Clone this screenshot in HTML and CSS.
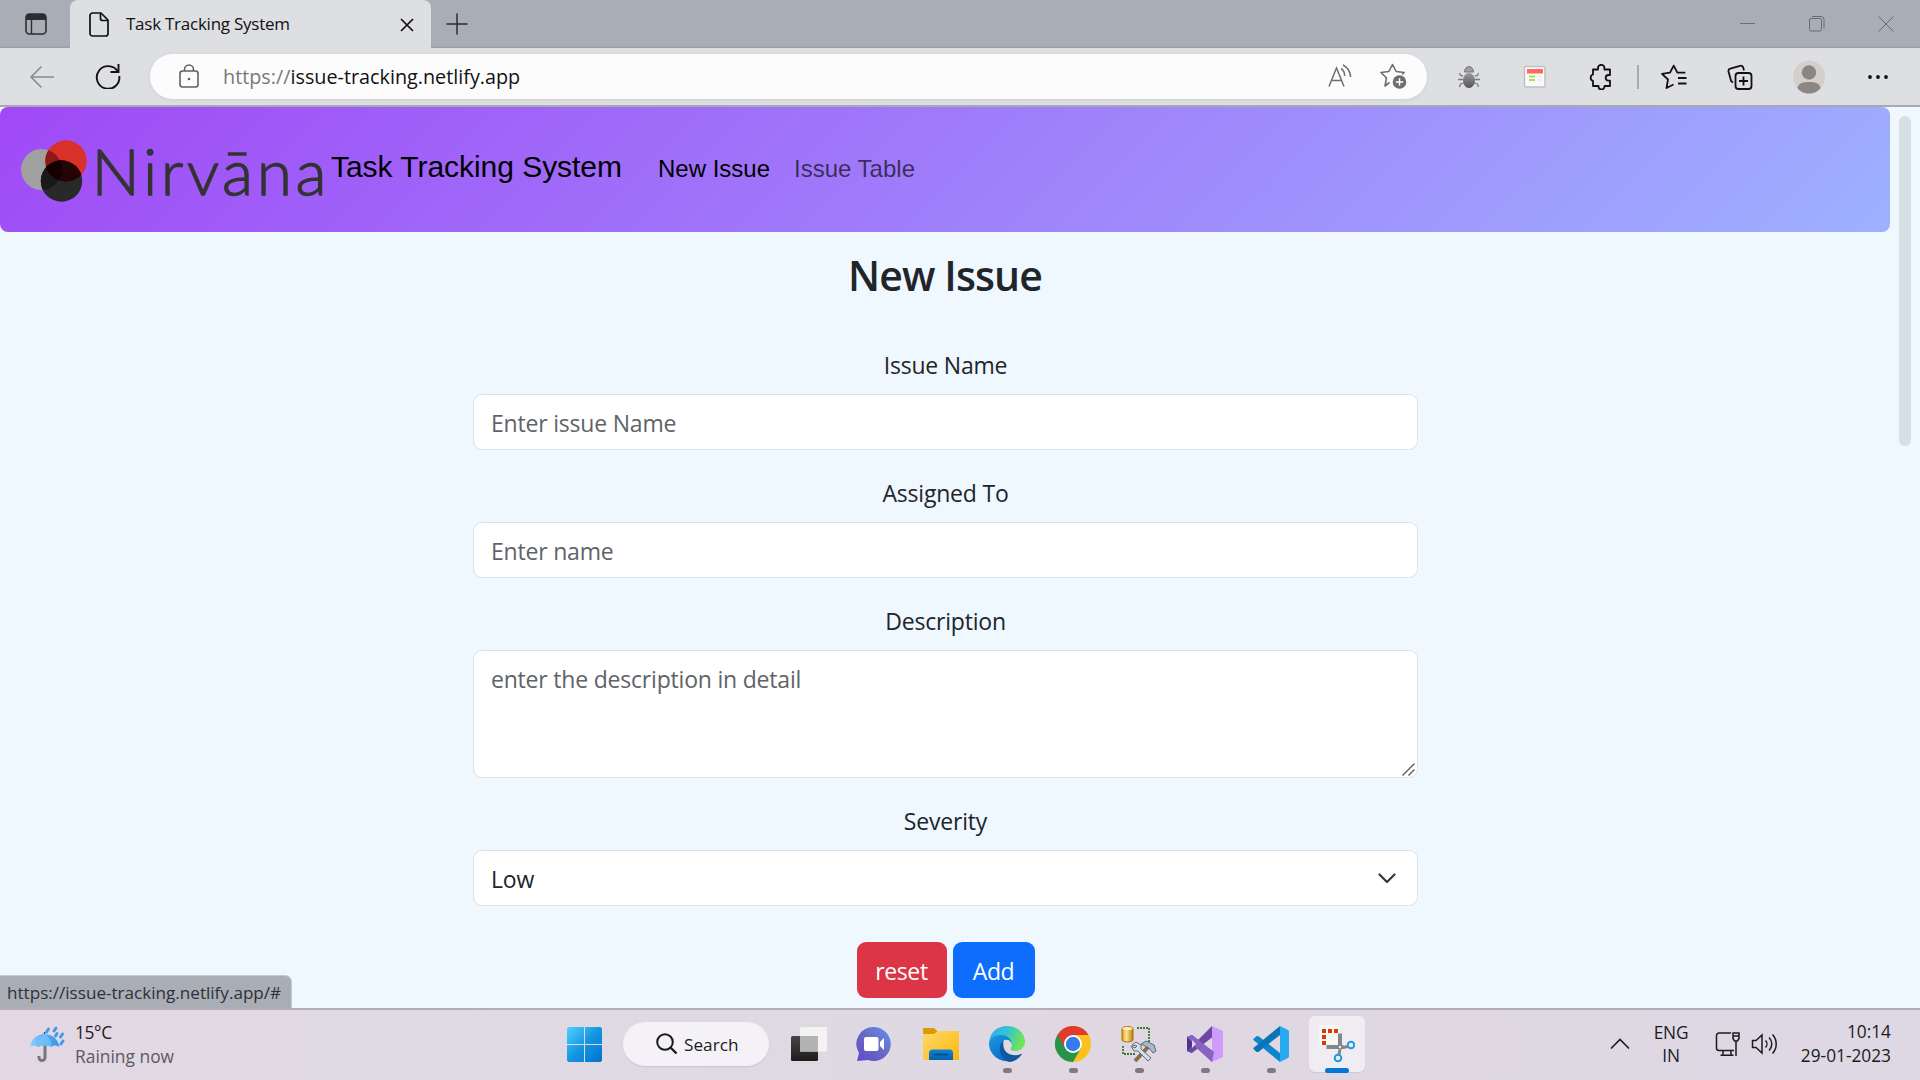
FILE: index.html
```html
<!DOCTYPE html>
<html lang="en">
<head>
<meta charset="utf-8">
<title>Task Tracking System</title>
<link rel="stylesheet" href="styles.css">
</head>
<body>
<div class="tabstrip">
  <svg class="tab-actions" width="22" height="22" viewBox="0 0 22 22"><rect x="1" y="1" width="20" height="20" rx="3.5" fill="none" stroke="#2b2d31" stroke-width="1.6"/><path d="M1 7V4a3 3 0 0 1 3-3h14a3 3 0 0 1 3 3v3z" fill="#2b2d31"/><path d="M6.5 7v14" stroke="#2b2d31" stroke-width="1.4"/></svg>
  <div class="tab">
    <svg width="20" height="25" viewBox="0 0 20 25" fill="none" stroke="#111" stroke-width="1.7" stroke-linejoin="round"><path d="M3.5 1H12l7 7v13.5a2.5 2.5 0 0 1-2.500 2.500h-13A2.500 2.500 0 0 1 1 21.500v-18A2.500 2.500 0 0 1 3.500 1z"/><path d="M11.500 1v5.500a2 2 0 0 0 2 2H19"/></svg>
    <span class="tab-title">Task Tracking System</span>
    <svg class="tab-close" width="14" height="14" viewBox="0 0 14 14"><path d="M1 1l12 12M13 1L1 13" stroke="#111" stroke-width="1.7"/></svg>
  </div>
  <svg class="tab-add" width="22" height="22" viewBox="0 0 22 22"><path d="M11 .5v21M.5 11h21" stroke="#2b2d31" stroke-width="1.500"/></svg>
  <div class="window-controls">
    <svg width="16" height="16" viewBox="0 0 16 16"><path d="M0 7.500h15" stroke="#6a6d73"/></svg>
    <svg width="16" height="16" viewBox="0 0 16 16" fill="none" stroke="#6a6d73"><rect x=".5" y="2.500" width="12" height="12.500" rx="1.500"/><path d="M3 .5h9a3 3 0 0 1 3 3v9"/></svg>
    <svg width="16" height="16" viewBox="0 0 16 16"><path d="M.5.5l15 15M15.500.5l-15 15" stroke="#6a6d73"/></svg>
  </div>
</div>

<div class="toolbar">
  <svg class="back" width="26" height="24" viewBox="0 0 26 24" fill="none" stroke="#8a8b8e" stroke-width="1.600"><path d="M12.500 1.500L2 12l10.500 10.500M2 12h23"/></svg>
  <svg class="reload" width="26" height="26" viewBox="0 0 26 26" fill="none" stroke="#111" stroke-width="1.900"><path d="M22.700 8.500A11.300 11.300 0 1 0 24.300 13"/><path d="M23.500 1v8h-8"/></svg>
  <div class="address">
    <svg class="lock" width="20" height="24" viewBox="0 0 20 24" fill="none" stroke="#5f6063" stroke-width="1.600"><rect x="1" y="7" width="18" height="16" rx="2.500"/><path d="M5.500 7V5.500a4.500 4.500 0 0 1 9 0V7"/><circle cx="10" cy="15" r="1.300" fill="#5f6063" stroke="none"/></svg>
    <span class="url"><span class="scheme">https://</span>issue-tracking.netlify.app</span>
    <svg class="read" width="24" height="24" viewBox="0 0 24 24" fill="none" stroke="#6d6e70" stroke-width="1.500"><path d="M1 22.500L8.500 4l7.500 18.500M3.500 16.500h10M13 4.500c2.500 1.500 3.700 4 3.700 7.500M15 1c5 2.500 7.300 6.500 7.600 12"/></svg>
    <svg class="star" width="27" height="27" viewBox="0 0 27 27"><path d="M9.500 19.500L5 23l1.500-8L1 9.500l7.800-1L12.500 1.500l3.700 7 8 1-2 2" fill="none" stroke="#6d6e70" stroke-width="1.600" stroke-linejoin="round"/><circle cx="19.500" cy="19" r="6.800" fill="#6d6e70"/><path d="M19.500 15.300v7.400M15.800 19h7.400" stroke="#fff" stroke-width="1.500"/></svg>
  </div>
  <div class="slot"><svg width="24" height="24" viewBox="0 0 24 24"><defs><linearGradient id="bug" x2="0" y2="1"><stop stop-color="#9a9a9a"/><stop offset="1" stop-color="#555"/></linearGradient></defs><path d="M6 11L3.500 10.500 2.500 8M6 14.500H1M7 18l-3.500 1L2.500 22M18 11l2.500-.5L21.500 8M18 14.500h5M17 18l3.500 1 1 3" fill="none" stroke="#7b7b7b" stroke-width="1.300"/><path d="M7.500 7a4.500 5.500 0 0 1 9 0z" fill="#a0a0a0" stroke="#777"/><ellipse cx="12" cy="15.500" rx="6" ry="7.500" fill="url(#bug)"/></svg></div>
  <div class="slot"><svg width="24" height="24" viewBox="0 0 24 24"><rect x="1.500" y="1.500" width="20.500" height="20.500" rx="1.500" fill="#fafafa" stroke="#bfc1c1" stroke-width="1.500"/><path d="M4 4h16v4.500H4z" fill="#ff6961"/><path d="M6 11.500h6M6 15h6" stroke="#a4e34d" stroke-width="2.200"/><path d="M14 11.500h5M14 15h5" stroke="#eee" stroke-width="2"/></svg></div>
  <div class="slot"><svg width="24" height="26" viewBox="0 0 24 26"><path d="M4 5.500h5V4a3.200 3.200 0 0 1 6.400 0v1.500H21V11h-1.500a2.800 2.800 0 0 0 0 5.600H21V22h-5.500v.5a3 3 0 0 1-6 0V22H4v-5.200a3.300 3.300 0 0 1 0-6.300z" fill="none" stroke="#111" stroke-width="1.800" stroke-linejoin="round"/></svg></div>
  <i class="divider"></i>
  <div class="slot"><svg width="26" height="26" viewBox="0 0 26 26" fill="none" stroke="#111" stroke-width="1.800" stroke-linejoin="round"><path d="M12.500 20.500L5.500 24 7 15.500 1 9.800l8-1.200 3.700-7 3.700 7h8M17 14h8.500M17 19.500h8.500"/></svg></div>
  <div class="slot"><svg width="26" height="26" viewBox="0 0 26 26" fill="none" stroke="#111" stroke-width="1.800"><path d="M17 6.500l-.8-3A2.500 2.500 0 0 0 13 1.800L3.300 4.600A2.500 2.500 0 0 0 1.500 7.500l2.700 9.800L6 18.500"/><rect x="8.500" y="9" width="16" height="16" rx="3"/><path d="M16.500 12.500v9M12 17h9"/></svg></div>
  <div class="slot avatar"><svg width="32" height="34" viewBox="0 0 32 34"><ellipse cx="16" cy="17" rx="16" ry="16.500" fill="#d3d0cc"/><circle cx="16" cy="12.500" r="7.200" fill="#8b8684"/><path d="M4.500 28C6 22.500 10 22 16 22s10 .5 11.500 6c-3 4-7 5.500-11.500 5.500S7.500 32 4.500 28z" fill="#8b8684"/></svg></div>
  <div class="slot"><svg width="22" height="6" viewBox="0 0 22 6" fill="#111"><circle cx="3" cy="3" r="1.900"/><circle cx="11" cy="3" r="1.900"/><circle cx="19" cy="3" r="1.900"/></svg></div>
</div>

<main class="page">
  <div class="content">
    <nav class="navbar">
      <svg class="logo" width="306" height="76" viewBox="0 0 306 76">
        <circle cx="20.500" cy="36.500" r="20.500" fill="#a1a1a1"/><circle cx="45" cy="28" r="20.700" fill="#d9302a"/>
        <clipPath id="red"><circle cx="45" cy="28" r="20.700"/></clipPath><clipPath id="dark"><circle cx="40.500" cy="48" r="20.700"/></clipPath>
        <circle cx="20.500" cy="36.500" r="20.500" fill="#8c1b18" clip-path="url(#red)"/>
        <circle cx="40.500" cy="48" r="20.700" fill="#292929"/>
        <g clip-path="url(#dark)"><circle cx="20.500" cy="36.500" r="20.500" fill="#191919"/><circle cx="45" cy="28" r="20.700" fill="#240405"/><circle cx="20.500" cy="36.500" r="20.500" fill="#140000" clip-path="url(#red)"/></g>
        <text x="70.500" y="61.500" class="wordmark" textLength="235">Nirvāna</text>
      </svg>
      <span class="brand">Task Tracking System</span>
      <a class="nav-link active">New Issue</a>
      <a class="nav-link">Issue Table</a>
    </nav>
    <h1>New Issue</h1>
    <form class="form">
      <label>Issue Name</label>
      <div class="field">Enter issue Name</div>
      <label>Assigned To</label>
      <div class="field">Enter name</div>
      <label>Description</label>
      <div class="field area">enter the description in detail<svg class="grip" width="13" height="13" viewBox="0 0 13 13"><path d="M.5 12.500l12-12M6.500 12.500l6-6" stroke="#555" stroke-width="1.300"/></svg></div>
      <label>Severity</label>
      <div class="field select">Low<svg width="18" height="11" viewBox="0 0 18 11"><path d="M1.500 1.500L9 9l7.500-7.500" fill="none" stroke="#343a40" stroke-width="2.200" stroke-linecap="round" stroke-linejoin="round"/></svg></div>
      <div class="buttons"><span class="btn reset">reset</span><span class="btn add">Add</span></div>
    </form>
  </div>
  <div class="scroll"><i></i></div>
  <div class="status">https://issue-tracking.netlify.app/#</div>
</main>

<footer class="taskbar">
  <div class="weather">
    <svg width="36" height="38" viewBox="0 0 36 38"><defs><linearGradient id="umb" x2="1"><stop stop-color="#8fd0ff"/><stop offset=".5" stop-color="#55aef5"/><stop offset="1" stop-color="#3b94e8"/></linearGradient></defs><path d="M15 20v12.500a3 3 0 0 1-6 0V31" fill="none" stroke="#777" stroke-width="3"/><path d="M14.500 7v3" stroke="#555" stroke-width="1.500"/><path d="M0 22C1 14 7 9 14.500 9S28 14 29.500 22c-3-2-6-2-8 0-4-2-10-2-13 0-3-2-6-2-8.500 0z" fill="url(#umb)"/><path d="M8.500 22c0-6 2-11 6-13 4 2 7 7 7 13-4-2-10-2-13 0z" fill="#79c3fb" opacity=".7"/><path d="M18.500 4l-2 3M26 3l-2 3M25.500 11l1.500-2.500M32.500 9l-2 3M33 16l-2 3" stroke="#3c9bf0" stroke-width="3" stroke-linecap="round"/></svg>
    <div><div class="temp">15°C</div><div class="cond">Raining now</div></div>
  </div>
  <div class="apps">
    <div class="app"><svg width="35" height="35" viewBox="0 0 35 35"><defs><linearGradient id="win" x2="1" y2="1"><stop stop-color="#4fd2ff"/><stop offset=".5" stop-color="#1496e0"/><stop offset="1" stop-color="#0072d0"/></linearGradient></defs><path d="M1.500 0H17v17H0V1.500zM18 0h15.500L35 1.500V17H18zM0 18h17v17H1.500L0 33.500zM18 18h17v15.500L33.500 35H18z" fill="url(#win)"/></svg></div>
    <div class="search"><svg width="22" height="22" viewBox="0 0 22 22" fill="none" stroke="#1b1b1f" stroke-width="2"><circle cx="9" cy="9" r="7.800"/><path d="M14.500 14.500l6 6" stroke-width="2.400"/></svg><span>Search</span></div>
    <div class="app"><svg width="36" height="36" viewBox="0 0 36 36"><defs><linearGradient id="tv" x2="0" y2="1"><stop stop-color="#454545"/><stop offset="1" stop-color="#1c1c1c"/></linearGradient></defs><rect y="10" width="27" height="25" rx="1.500" fill="url(#tv)"/><rect x="9" y="1" width="27" height="24.500" rx="1" fill="#f3f3f3"/><path d="M9 10h18v15.500H9z" fill="#b3b3b3"/></svg></div>
    <div class="app chat"><svg width="36" height="36" viewBox="0 0 36 36"><defs><linearGradient id="chat" x1="1" x2="0" y2="1"><stop stop-color="#6191f2"/><stop offset=".5" stop-color="#6b68c4"/><stop offset="1" stop-color="#5b4ccc"/></linearGradient></defs><path d="M18 1a17 17 0 1 1-6 33L1 35l2-8A17 17 0 0 1 18 1z" fill="url(#chat)"/><rect x="8" y="11" width="14.500" height="14" rx="2" fill="#fff"/><path d="M24 16l4-4v12l-4-4z" fill="#fff"/></svg></div>
    <div class="app"><svg width="36" height="36" viewBox="0 0 36 36"><defs><linearGradient id="fold" x2="1" y2="1"><stop stop-color="#ffd86a"/><stop offset="1" stop-color="#fbb80c"/></linearGradient><linearGradient id="fb" x2="0" y2="1"><stop stop-color="#0f85d5"/><stop offset="1" stop-color="#0660ae"/></linearGradient></defs><path d="M0 9V3a1 1 0 0 1 1-1h10l4 4-4 3z" fill="#dc9b05"/><path d="M0 8h11l4-3h20a1 1 0 0 1 1 1v28H0z" fill="url(#fold)"/><path d="M6 34v-7a3.500 3.500 0 0 1 3.500-3.500h17A3.500 3.500 0 0 1 30 27v7z" fill="url(#fb)"/><path d="M11 28.500h14" stroke="#064987" stroke-width="1.500" stroke-linecap="round"/></svg></div>
    <div class="app run"><svg width="36" height="36" viewBox="0 0 36 36"><defs><linearGradient id="e1" x2="1" y2=".3"><stop stop-color="#35a9ec"/><stop offset=".5" stop-color="#32c3d5"/><stop offset="1" stop-color="#6ee35b"/></linearGradient><linearGradient id="e2" x2=".5" y2="1"><stop stop-color="#1899df"/><stop offset="1" stop-color="#0b6ec6"/></linearGradient></defs><path d="M0 18C0 6 9 0 18 0c11 0 18 8 18 15.500C36 22 31 25 26 25c-4 0-5-1.500-4-3 2-3 1-9-6-9C9 13 3 14 0 18z" fill="url(#e1)"/><path d="M0 18c1-6 6-9 12-9 7 0 11 5 10.500 9-.8-4-4-5-7-4-6 3-5 15 5 21A18 18 0 0 1 0 18z" fill="url(#e2)"/><path d="M14.500 14.500C9 18 9 31 20 35.900c5 .1 11-3.900 13.300-8.400-7 3.500-16 1.500-18.300-5-1-3-.8-6-.5-8z" fill="#1255a0"/></svg></div>
    <div class="app run"><svg width="36" height="36" viewBox="0 0 36 36"><circle cx="18" cy="18" r="18" fill="#fcc21b"/><path d="M2.400 9A18 18 0 0 0 18 36l7.800-13.500L18 18z" fill="#28934a"/><path d="M2.400 9A18 18 0 0 1 33.600 9H18l-7.800 13.500z" fill="#df3c30"/><path d="M2.400 9L10.200 22.500 14 27 6 28z" fill="#28934a"/><circle cx="18" cy="18" r="9" fill="#fff"/><circle cx="18" cy="18" r="7.200" fill="#367bee"/></svg></div>
    <div class="app run"><svg width="36" height="36" viewBox="0 0 36 36"><defs><linearGradient id="cyl" x2="1"><stop stop-color="#d69b12"/><stop offset=".4" stop-color="#ffe493"/><stop offset="1" stop-color="#ba7f04"/></linearGradient></defs><path d="M16 2h12v14M2 20v8h12" fill="none" stroke="#3d7a32" stroke-width="1.800" stroke-dasharray="2 1"/><path d="M1 2.500C1 0 12 0 12 2.500V14c0 2.500-11 2.500-11 0z" fill="url(#cyl)" stroke="#a36f06"/><ellipse cx="6.500" cy="2.500" rx="5" ry="1.500" fill="#ffedb0"/><path d="M14 35l14-15" stroke="#8a6b46" stroke-width="4"/><path d="M20 18l5-3 8 4 2 6-3 2-4-5z" fill="#a7b9cf" stroke="#5f6b78"/><path d="M11 19l4-3 5 3v4l10 9-3 3-10-10h-4l-3-5 4 2 2-2z" fill="#d6dee8" stroke="#606b78"/></svg></div>
    <div class="app run"><svg width="36" height="36" viewBox="0 0 36 36"><path d="M0 11l5-2v18l-5-2z" fill="#52318a"/><path d="M5 9l22 17-2 10L0 11z" fill="#8963c4"/><path d="M0 25l5 2L27 10 25 0z" fill="#6c48a4"/><path d="M5 9l8 6.500-5 4.500-3-2.500z" fill="#9572ce"/><path d="M25 0l11 5v26l-11 5z" fill="#cf9bfb"/><path d="M5 9l22 17-2 10L5 18z" fill="#8963c4"/><path d="M5 14v8l4-4zM25 12v12l-8-6z" fill="#ded8e2"/></svg></div>
    <div class="app run"><svg width="36" height="36" viewBox="0 0 36 36"><path d="M1 12.500l2-2c1-1 2-.5 3 0L27 27v9L1 14.500c-1-1-1-1 0-2z" fill="#0a86cb"/><path d="M1 23.500l2 2c1 1 2 .5 3 0L27 9V0L1 21.500c-1 1-1 1 0 2z" fill="#0875b9"/><path d="M27 0l8 4 1 1v26l-1 1-8 4z" fill="#29a9f0"/></svg></div>
    <div class="app tile"><svg width="36" height="38" viewBox="0 0 36 38"><rect width="21" height="20" fill="#f6f6f7"/><path d="M3 4h4v4H3zM9 4h4v4H9zM15 4h4v4h-4zM3 10h4v4H3zM3 16h4v4H3z" fill="#d83b01"/><path d="M21 8.500v16M7.500 22h17" stroke="#84878a" stroke-width="4"/><circle cx="21" cy="22" r="1.200" fill="#eee"/><circle cx="32" cy="20" r="3.300" fill="none" stroke="#1a9be0" stroke-width="2"/><circle cx="19" cy="33" r="3.300" fill="none" stroke="#1a9be0" stroke-width="2"/><path d="M24 22.500l5-1M21 24.500l-1 5" stroke="#84878a" stroke-width="3"/></svg></div>
  </div>
  <div class="tray">
    <svg width="20" height="12" viewBox="0 0 20 12"><path d="M1 10.500l9-9 9 9" fill="none" stroke="#1b1b1f" stroke-width="1.600"/></svg>
    <div class="lang">ENG<br>IN</div>
    <svg class="net" width="26" height="26" viewBox="0 0 26 26" fill="none" stroke="#1b1b1f" stroke-width="1.500"><path d="M16 2H4a2.500 2.500 0 0 0-2.500 2.500V17A2.500 2.500 0 0 0 4 19.500h15M8 20v4M16 20v4M5.500 24.300h13M18 2h6v5.500l-1.500 2.500h-3L18 7.500zM18 5h6M21 10v15"/></svg>
    <svg class="vol" width="26" height="24" viewBox="0 0 26 24" fill="none" stroke="#1b1b1f" stroke-width="1.500"><path d="M1.500 8.500H5L11 3v18l-6-5.500H1.500zM14.500 8.500a5 5 0 0 1 0 7M18 5.500a9 9 0 0 1 0 13M21.500 2.500a14 14 0 0 1 0 19"/></svg>
    <div class="clock"><div>10:14</div><div>29-01-2023</div></div>
  </div>
</footer>
</body>
</html>
```
FILE: styles.css
```css
* { box-sizing: border-box; }
body {
  margin: 0; width: 1920px; height: 1080px; overflow: hidden;
  display: flex; flex-direction: column;
  font-family: "Open Sans", "Noto Sans", sans-serif;
  background: #eff7ff; color: #212529;
}
svg { display: block; flex: none; }

.tabstrip { height: 48px; flex: none; display: flex; align-items: center; background: #a9adb5; box-shadow: inset 0 -2px 2px -1px #969aa2; }
.tab-actions { margin-left: 25px; }
.tab { width: 361px; height: 48px; margin-left: 23px; padding: 0 17px 0 19px; display: flex; align-items: center; background: #dedfe2; border-radius: 8px 8px 0 0; }
.tab-title { margin-left: 17px; font-size: 17px; line-height: 24px; letter-spacing: -.25px; color: #111; white-space: nowrap; }
.tab-close { margin-left: auto; margin-top: 2px; }
.tab-add { margin-left: 15px; }
.window-controls { margin-left: auto; margin-right: 26px; display: flex; gap: 53px; }

.toolbar { height: 59px; flex: none; display: flex; align-items: center; background: #dedfe2; border-bottom: 2px solid #a8a9ae; padding-right: 9px; }
.back { margin-left: 29px; }
.reload { margin-left: 40px; margin-top: -1px; }
.address { width: 1277px; height: 45px; margin-left: 29px; margin-right: 9px; display: flex; align-items: center; background: #fcfcfd; border-radius: 23px; box-shadow: 0 1px 4px #ced0d5; }
.lock { margin-left: 29px; margin-top: -2px; }
.url { margin-left: 24px; font-size: 19.800px; color: #111; white-space: nowrap; }
.scheme { color: #77787a; }
.read { margin-left: auto; margin-top: -2px; }
.star { margin-left: 28px; margin-right: 20px; }
.slot { width: 66px; display: flex; justify-content: center; }
.divider { width: 2px; height: 24px; margin: 0 2px 0 3px; background: #aaabae; }
.avatar { width: 72px; }

.page { height: 901px; flex: none; position: relative; display: flex; background: #eff7ff; }
.content { width: 1890px; }
.navbar { height: 125px; padding-left: 21px; display: flex; align-items: center; background: linear-gradient(135deg, #a049f6, #9eb1ff); border-radius: 8px; font-family: "Liberation Sans", Arial, sans-serif; }
.logo { width: 306px; margin-top: 2px; }
.wordmark { font-family: Lato, sans-serif; font-weight: 300; font-size: 64px; fill: #333; stroke: #333; stroke-width: 1.300px; }
.brand { margin-left: 4px; margin-top: -5px; font-size: 30px; line-height: 40px; letter-spacing: -.04px; color: #000; white-space: nowrap; }
.nav-link { margin-left: 24px; margin-top: -1px; font-size: 24px; line-height: 36px; color: rgba(0, 0, 0, .65); white-space: nowrap; }
.nav-link.active { margin-left: 36px; color: #000; }

h1 { margin: 18px 0 0; height: 50px; line-height: 50px; text-align: center; font-size: 41px; font-weight: 600; letter-spacing: -.9px; }
.form { width: 945px; margin: 47px 0 0 473px; display: flex; flex-direction: column; }
label { height: 36px; margin-bottom: 11px; line-height: 36px; font-size: 23px; letter-spacing: -.2px; text-align: center; }
.field { height: 56px; margin-bottom: 25px; padding: 0 17px; display: flex; line-height: 56px; font-size: 23px; letter-spacing: -.2px; color: #5f6368; background: #fff; border: 1px solid #dee2e6; border-radius: 9px; }
.area { height: 128px; position: relative; }
.grip { position: absolute; right: 2px; bottom: 1px; }
.select { color: #212529; justify-content: space-between; padding-right: 21px; }
.select svg { margin-top: 22px; }
.buttons { display: flex; justify-content: center; gap: 6px; margin-top: 11px; }
.btn { height: 56px; line-height: 58px; border-radius: 9px; color: #fff; font-size: 23px; letter-spacing: -.4px; text-align: center; }
.reset { width: 90px; background: #dc3545; }
.add { width: 82px; background: #0d6efd; }

.scroll { width: 30px; padding: 9px 0 0 9px; }
.scroll i { display: block; width: 12px; height: 330px; border-radius: 6px; background: #d6dfe3; }
.status { position: absolute; left: 0; bottom: 0; width: 292px; height: 33px; padding-left: 7px; line-height: 33px; font-size: 17.100px; white-space: nowrap; color: #2f3135; background: #a9adb5; border-top: 1px solid #c5c9d0; border-right: 1px solid #c5c9d0; border-radius: 0 7px 0 0; }

.taskbar { height: 72px; flex: none; display: grid; grid-template-columns: 551px 819px 1fr; border-top: 2px solid #b2adb8; background: linear-gradient(90deg, #e3d7e3, #dfdae3 20%, #dfd8e2 60%, #ded8e4); }
.weather { display: flex; padding: 15px 0 0 30px; font-size: 17.400px; line-height: 24px; }
.weather > div { margin: -5px 0 0 9px; }
.temp { color: #1b1b1f; letter-spacing: -.4px; }
.cond { color: #5c5a61; }
.apps { display: flex; align-items: center; height: 68px; }
.app { width: 66px; height: 56px; display: flex; justify-content: center; align-items: center; position: relative; }
.search { width: 146px; height: 44px; margin: 0 7px 0 6px; padding-left: 33px; display: flex; align-items: center; gap: 6px; border-radius: 22px; background: #f5f2f7; box-shadow: 0 1px 1px #cbc4cf; font-size: 17.200px; color: #1b1b1f; }
.chat svg { margin-right: 3px; }
.run::after, .tile::after { content: ""; position: absolute; left: 28.500px; bottom: -1px; width: 9px; height: 5px; border-radius: 3px; background: #7e7a80; }
.tile { width: 56px; margin-left: 5px; background: #f0edf2; border-radius: 6px; box-shadow: 0 1px 1px #cdc7d1; }
.tile::after { left: 16px; width: 24px; background: #0078d4; }
.tray { display: flex; align-items: center; height: 68px; padding: 0 29px 0 240px; color: #1b1b1f; font-size: 17.300px; line-height: 23px; }
.lang { width: 44px; margin-left: 19px; text-align: center; letter-spacing: -.2px; }
.net { margin-left: 22px; }
.vol { margin-left: 10px; }
.clock { margin-left: auto; text-align: right; line-height: 24px; white-space: nowrap; }
```
